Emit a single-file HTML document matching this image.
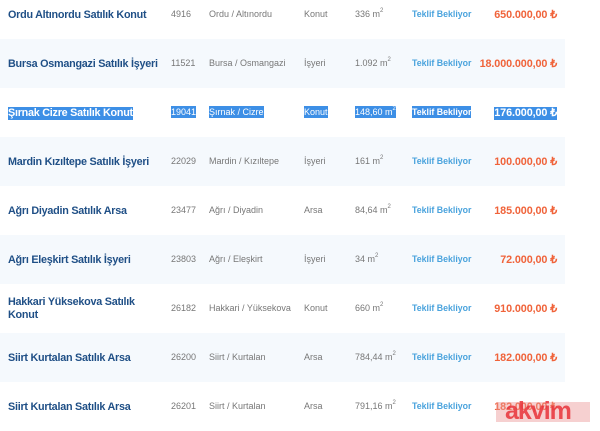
<!DOCTYPE html>
<html><head><meta charset="utf-8"><style>
*{margin:0;padding:0;box-sizing:border-box}
body{width:600px;height:429px;overflow:hidden;background:#fff;font-family:"Liberation Sans",sans-serif;position:relative}
.row{position:absolute;left:0;width:565px;height:49px}
.alt{background:#f5f9fd}
.c{position:absolute;white-space:nowrap;font-size:9px;color:#777;line-height:12px}
.t{left:8px;font-size:10.8px;font-weight:bold;color:#1f4f86;line-height:13px;letter-spacing:-0.25px;margin-top:2px}
.id{left:171px}.loc{left:209px}.ty{left:304px}.ar{left:355px}
.st{left:412px;font-weight:bold;color:#4aa3dd;font-size:8.8px}
.pr{right:8px;font-size:10.8px;font-weight:bold;color:#f0633a;line-height:13px;letter-spacing:-0.1px;margin-top:2px}
sup{font-size:6px;vertical-align:top;line-height:6px}
.sel{background:#3d8fe6;color:#fff!important}
</style></head><body>
<div class="row" style="top:-10px">
<div class="c t" style="top:17px">Ordu Altınordu Satılık Konut</div><div class="c id" style="top:18px">4916</div><div class="c loc" style="top:18px">Ordu / Altınordu</div><div class="c ty" style="top:18px">Konut</div><div class="c ar" style="top:18px">336 m<sup>2</sup></div><div class="c st" style="top:18px">Teklif Bekliyor</div><div class="c pr" style="top:17px">650.000,00 ₺</div></div>
<div class="row alt" style="top:39px">
<div class="c t" style="top:17px">Bursa Osmangazi Satılık İşyeri</div><div class="c id" style="top:18px">11521</div><div class="c loc" style="top:18px">Bursa / Osmangazi</div><div class="c ty" style="top:18px">İşyeri</div><div class="c ar" style="top:18px">1.092 m<sup>2</sup></div><div class="c st" style="top:18px">Teklif Bekliyor</div><div class="c pr" style="top:17px">18.000.000,00 ₺</div></div>
<div class="row" style="top:88px">
<div class="c t sel" style="top:17px">Şırnak Cizre Satılık Konut</div><div class="c id sel" style="top:18px">19041</div><div class="c loc sel" style="top:18px">Şırnak / Cizre</div><div class="c ty sel" style="top:18px">Konut</div><div class="c ar sel" style="top:18px">148,60 m<sup>2</sup></div><div class="c st sel" style="top:18px">Teklif Bekliyor</div><div class="c pr sel" style="top:17px">176.000,00 ₺</div></div>
<div class="row alt" style="top:137px">
<div class="c t" style="top:17px">Mardin Kızıltepe Satılık İşyeri</div><div class="c id" style="top:18px">22029</div><div class="c loc" style="top:18px">Mardin / Kızıltepe</div><div class="c ty" style="top:18px">İşyeri</div><div class="c ar" style="top:18px">161 m<sup>2</sup></div><div class="c st" style="top:18px">Teklif Bekliyor</div><div class="c pr" style="top:17px">100.000,00 ₺</div></div>
<div class="row" style="top:186px">
<div class="c t" style="top:17px">Ağrı Diyadin Satılık Arsa</div><div class="c id" style="top:18px">23477</div><div class="c loc" style="top:18px">Ağrı / Diyadin</div><div class="c ty" style="top:18px">Arsa</div><div class="c ar" style="top:18px">84,64 m<sup>2</sup></div><div class="c st" style="top:18px">Teklif Bekliyor</div><div class="c pr" style="top:17px">185.000,00 ₺</div></div>
<div class="row alt" style="top:235px">
<div class="c t" style="top:17px">Ağrı Eleşkirt Satılık İşyeri</div><div class="c id" style="top:18px">23803</div><div class="c loc" style="top:18px">Ağrı / Eleşkirt</div><div class="c ty" style="top:18px">İşyeri</div><div class="c ar" style="top:18px">34 m<sup>2</sup></div><div class="c st" style="top:18px">Teklif Bekliyor</div><div class="c pr" style="top:17px">72.000,00 ₺</div></div>
<div class="row" style="top:284px;height:49px">
<div class="c t" style="top:10px">Hakkari Yüksekova Satılık<br>Konut</div><div class="c id" style="top:18px">26182</div><div class="c loc" style="top:18px">Hakkari / Yüksekova</div><div class="c ty" style="top:18px">Konut</div><div class="c ar" style="top:18px">660 m<sup>2</sup></div><div class="c st" style="top:18px">Teklif Bekliyor</div><div class="c pr" style="top:17px">910.000,00 ₺</div></div>
<div class="row alt" style="top:333px">
<div class="c t" style="top:17px">Siirt Kurtalan Satılık Arsa</div><div class="c id" style="top:18px">26200</div><div class="c loc" style="top:18px">Siirt / Kurtalan</div><div class="c ty" style="top:18px">Arsa</div><div class="c ar" style="top:18px">784,44 m<sup>2</sup></div><div class="c st" style="top:18px">Teklif Bekliyor</div><div class="c pr" style="top:17px">182.000,00 ₺</div></div>
<div class="row" style="top:382px">
<div class="c t" style="top:17px">Siirt Kurtalan Satılık Arsa</div><div class="c id" style="top:18px">26201</div><div class="c loc" style="top:18px">Siirt / Kurtalan</div><div class="c ty" style="top:18px">Arsa</div><div class="c ar" style="top:18px">791,16 m<sup>2</sup></div><div class="c st" style="top:18px">Teklif Bekliyor</div><div class="c pr" style="top:17px">182.000,00 ₺</div></div>
<div style="position:absolute;left:496px;top:402px;width:94px;height:20px;background:rgba(235,150,150,.45)"></div>
<div style="position:absolute;left:505px;top:397px;font:bold 25px 'Liberation Sans',sans-serif;color:#e8333a;letter-spacing:-1px;opacity:.85">akvim</div>
</body></html>
